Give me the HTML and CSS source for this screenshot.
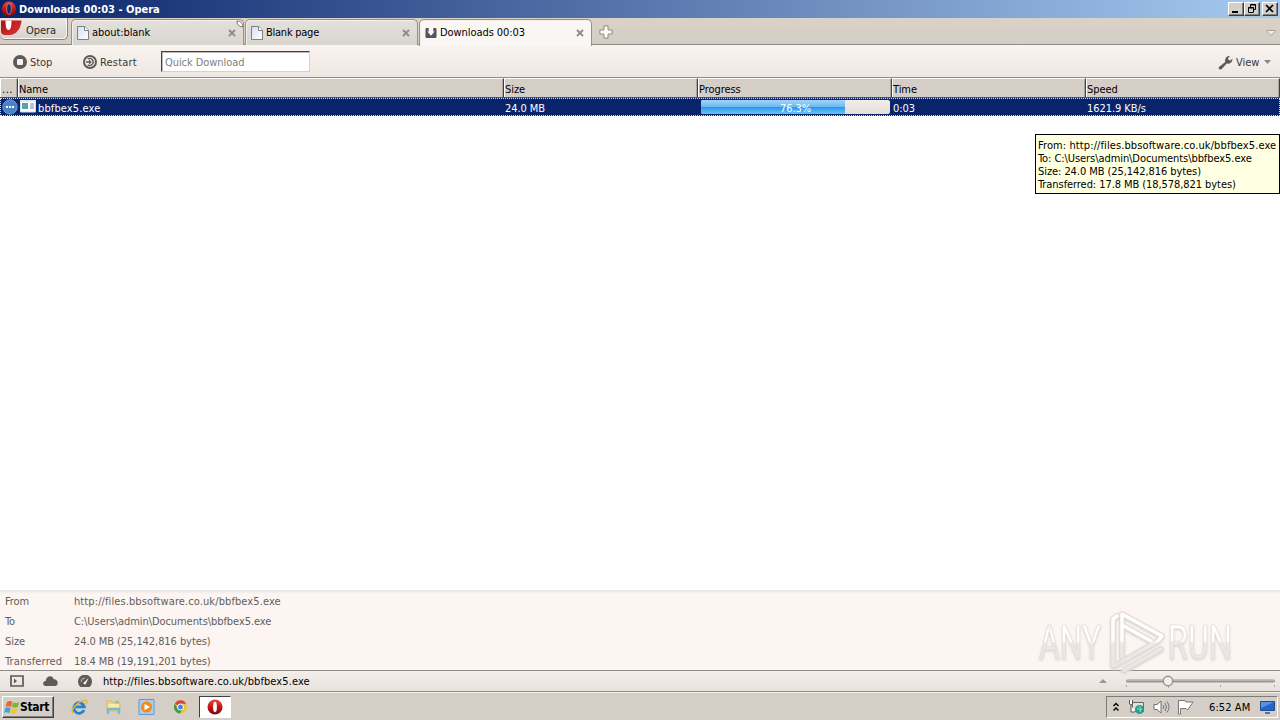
FILE: index.html
```html
<!DOCTYPE html>
<html lang="en">
<head>
<meta charset="utf-8">
<title>Downloads 00:03 - Opera</title>
<link rel="stylesheet" href="styles.css">
</head>
<body>
<svg class="defs" width="0" height="0">
  <defs>
    <linearGradient id="red" x1="0" y1="0" x2="0" y2="1"><stop offset="0" stop-color="#ed4a40"/><stop offset=".5" stop-color="#c51414"/><stop offset="1" stop-color="#7e0508"/></linearGradient>
    <linearGradient id="menured" x1="0" y1="0" x2="1" y2="1"><stop offset="0" stop-color="#b00d12"/><stop offset="1" stop-color="#e03a36"/></linearGradient>
    <linearGradient id="doc" x1="0" y1="0" x2="1" y2="1"><stop offset="0" stop-color="#d5dff0"/><stop offset="1" stop-color="#fff"/></linearGradient>
    <linearGradient id="mark" x1="0" y1="0" x2="0" y2="1"><stop offset="0" stop-color="#fff"/><stop offset=".48" stop-color="#fff"/><stop offset=".52" stop-color="#eee8e6"/><stop offset="1" stop-color="#e9e4e2"/></linearGradient>
    <symbol id="page" viewBox="0 0 12 14"><path d="M.5.5h7.300l3.700 3.700v9.300H.5z" fill="url(#doc)" stroke="#7b7f8c"/><path d="M7.500.5v4h4" fill="#fff" stroke="#7b7f8c"/></symbol>
    <symbol id="close" viewBox="0 0 8 8"><path d="M1 1l6 6M7 1L1 7" stroke="#918c87" stroke-width="1.900"/></symbol>
  </defs>
</svg>
<div class="screen">
  <header class="titlebar">
    <svg class="title-logo" width="16" height="16" viewBox="0 0 16 16"><ellipse cx="8" cy="8" rx="7" ry="7.500" fill="url(#red)"/><ellipse cx="8" cy="8" rx="2.300" ry="5.300" fill="#0d2a6c" stroke="#f0a8a4" stroke-width=".6"/></svg>
    <span class="title">Downloads 00:03 - Opera</span>
    <div class="winbtns">
      <span class="wb"><svg width="14" height="12"><path d="M3 9h6" stroke="#000" stroke-width="2"/></svg></span>
      <span class="wb"><svg width="14" height="12" fill="none" stroke="#000"><path d="M5.500 4V1.500h5v5H9M5 2h6"/><path d="M3.500 4.500h5v5h-5zM3 5h6"/></svg></span>
      <span class="wb last"><svg width="14" height="12"><path d="M3 2l7 7M10 2L3 9" stroke="#000" stroke-width="1.700"/></svg></span>
    </div>
  </header>

  <nav class="tabbar">
    <div class="menu">
      <svg width="22" height="18" viewBox="0 0 22 18"><path d="M1 2.500h20.500C21 10 17 17 9 17H5C2.500 17 1 15.500 1 13z" fill="url(#menured)"/><path d="M5.500 2.500h6c0 5-.6 9.500-3 9.500s-3-4.500-3-9.500z" fill="#fff"/></svg>
      <span>Opera</span>
    </div>
    <div class="tab"><svg class="doc" width="12" height="14"><use href="#page"/></svg><span class="tl">about:blank</span><svg class="x" width="8" height="8"><use href="#close"/></svg>
      <svg class="curl" width="8" height="8" viewBox="0 0 8 8"><path d="M1 1c0 3 1 5 5.500 6C7 3 4 1 1 1z" fill="#fff" stroke="#77736e"/></svg></div>
    <div class="tab"><svg class="doc" width="12" height="14"><use href="#page"/></svg><span class="tl t-blank">Blank page</span><svg class="x" width="8" height="8"><use href="#close"/></svg></div>
    <div class="tab active"><svg class="dl" width="12" height="12" viewBox="0 0 13 12"><path d="M2 .5h2v4H2.500L6.500 9l4-4.500H9v-4h2q1.500 0 1.500 1.500v8q0 1.500-1.500 1.500H2Q.5 11.500.5 10V2Q.5.5 2 .5z" fill="#55525d"/></svg><span class="tl t-down">Downloads 00:03</span><svg class="x" width="8" height="8"><use href="#close"/></svg></div>
    <svg class="plus" width="14" height="14" viewBox="0 0 14 14"><path d="M5 .9h4V5h4.100v4H9v4.100H5V9H.9V5H5z" fill="#fff" stroke="#8e8984"/></svg>
    <svg class="trash" width="10" height="8" viewBox="0 0 10 8"><path d="M1 1.500h8v1L5 6.500 1 2.500z" fill="#ece8e2" stroke="#a7a39d"/></svg>
  </nav>

  <div class="toolbar">
    <svg width="14" height="14" viewBox="0 0 14 14"><circle cx="7" cy="7" r="7" fill="#5e5a58"/><rect x="4" y="4" width="6" height="6" rx="1" fill="#f6f1ed"/></svg>
    <span class="t-stop">Stop</span>
    <svg width="14" height="14" viewBox="0 0 14 14"><circle cx="7" cy="7" r="6" fill="none" stroke="#5e5a58" stroke-width="2"/><path d="M4.700 4.300A3.400 3.400 0 1 1 4.700 9.700" fill="none" stroke="#5e5a58" stroke-width="1.300"/><path d="M3 6.300h3V4.500L8.800 7 6 9.500V7.700H3z" fill="#5e5a58"/></svg>
    <span class="t-restart">Restart</span>
    <div class="quick">Quick Download</div>
    <div class="view">
      <svg width="15" height="15" viewBox="0 0 15 15"><path d="M1 12L7.200 7C6.500 3.500 8.500.8 12 1L10 3.300l.6 1.700 1.900.4L14.300 3.500C15 7 12 9.300 8.800 8.600L3.500 14.300C1.500 15-.2 13.500 1 12z" fill="#5e5a58"/></svg>
      <span>View</span>
      <svg width="7" height="4"><path d="M0 0h7L3.500 4z" fill="#8b8681"/></svg>
    </div>
  </div>

  <div class="grid head"><div class="dots">...</div><div>Name</div><div>Size</div><div>Progress</div><div>Time</div><div>Speed</div></div>
  <div class="grid row">
    <div class="state"><svg width="16" height="16" viewBox="0 0 16 16"><circle cx="8" cy="8" r="7.200" fill="#4a83c8" stroke="#6b9bd6"/><path d="M4 7h2v2H4zM7 7h2v2H7zM10 7h2v2h-2z" fill="#fff"/></svg></div>
    <div class="file"><svg width="16" height="13" viewBox="0 0 16 13"><path d="M.5.5h15v11.500H.5z" fill="#fff" stroke="#d4dce6"/><path d="M0 0h16v2H0z" fill="#dfe9f5"/><path d="M2 3h6v6H2z" fill="#55a3a4"/><path d="M10 4h4M10 6h4M10 8h4" stroke="#7785a0"/></svg><span>bbfbex5.exe</span></div>
    <div>24.0 MB</div>
    <div class="cell-bar"><div class="bar"><div class="fill" style="width:76.3%"></div><span>76.3%</span></div></div>
    <div>0:03</div><div>1621.9 KB/s</div>
  </div>

  <main class="empty">
    <div class="tip"><div class="url">From: http://files.bbsoftware.co.uk/bbfbex5.exe</div><div>To: C:\Users\admin\Documents\bbfbex5.exe</div><div>Size: 24.0 MB (25,142,816 bytes)</div><div>Transferred: 17.8 MB (18,578,821 bytes)</div></div>
  </main>

  <section class="details">
    <span>From</span><span class="url">http://files.bbsoftware.co.uk/bbfbex5.exe</span>
    <span>To</span><span>C:\Users\admin\Documents\bbfbex5.exe</span>
    <span>Size</span><span>24.0 MB (25,142,816 bytes)</span>
    <span class="wide">Transferred</span><span>18.4 MB (19,191,201 bytes)</span>
    <div class="watermark">
      <svg width="220" height="72" viewBox="0 0 220 72">
        <g class="marktext"><text transform="translate(5 54) scale(.65 1)">ANY</text><text transform="translate(134 54) scale(.66 1)">RUN</text></g>
        <g fill="none" stroke-linejoin="round" stroke-linecap="round">
          <path d="M79 60V14l4-3M88 52V9L128 31l-4 5M88 20l29 16M80 61l44-25M90 65l37-21" stroke="#e0dad8" stroke-width="5.500"/>
          <path d="M79 60V14l4-3M88 52V9L128 31l-4 5M88 20l29 16M80 61l44-25M90 65l37-21" stroke="url(#mark)" stroke-width="3.500"/>
        </g>
      </svg>
    </div>
  </section>

  <div class="status">
    <svg class="panel" width="14" height="12" viewBox="0 0 14 12"><path d="M1 1h12v10H1z" fill="none" stroke="#5e5a58" stroke-width="1.700"/><path d="M4 3.500L7 6 4 8.500z" fill="#5e5a58"/></svg>
    <svg class="cloud" width="15" height="10" viewBox="0 0 15 10"><path d="M3 10C-.8 10-.7 5 2.800 5 3-.7 10-1.200 10.700 3.300 15.500 2.800 16 10 12 10z" fill="#5e5a58"/></svg>
    <svg class="turbo" width="14" height="12" viewBox="0 0 14 12"><path d="M2.500 12A7 7 0 1 1 11.500 12z" fill="#5e5a58"/><path d="M5 8.500l5.500-5.500-3 6.500z" fill="#fff"/><path d="M3 7a4 4 0 0 1 4-4" stroke="#bbb" fill="none"/></svg>
    <span class="url">http://files.bbsoftware.co.uk/bbfbex5.exe</span>
    <svg class="zoom" width="178" height="20" viewBox="0 0 178 20"><path d="M0 12l4-4 4 4z" fill="#9b9691"/><path d="M28.500 10h146" stroke="#9c9692" stroke-width="3" stroke-linecap="round"/><path d="M28.500 9.500h146" stroke="#bbb5b0" stroke-linecap="round"/><path d="M27.500 14v2M69.500 14v3M121.500 14v2M175.500 14v2" stroke="#aaa5a0"/><circle cx="69" cy="10" r="4.700" fill="#f4efeb" stroke="#99938f" stroke-width="1.500"/></svg>
  </div>

  <footer class="taskbar">
    <div class="start"><svg width="16" height="15" viewBox="0 0 16 15"><path d="M3 2q3-2 5.500 0L7 7Q4.500 5.500 1.500 6.700z" fill="#e9672b"/><path d="M9.300 2.200q3 1.500 6 0L13.800 7q-3 1.500-6 0z" fill="#80b72e"/><path d="M1.200 8Q4 6.500 6.700 8.200l-1.500 5Q2.500 11.500 0 13z" fill="#479edb"/><path d="M7.600 8.300q3 1.500 6 .2l-1.500 4.700q-3 1.500-6 0z" fill="#f6c42d"/></svg><b>Start</b></div>
    <svg class="app" width="17" height="16" viewBox="0 0 17 16"><path d="M13 11A5.300 5.300 0 1 1 13.300 7.900H4.500" fill="none" stroke="#2684cf" stroke-width="2.800"/><path d="M2 14C-2 12 8 1 14.500 1.500 17 2 15.500 4 14.700 5" fill="none" stroke="#e4b82f" stroke-width="1.400"/></svg>
    <svg class="app" width="17" height="16" viewBox="0 0 17 16"><path d="M2 2h5l1 2h7v8H2z" fill="#f1d476" stroke="#d9b659" stroke-width=".8"/><path d="M3 5h11v5H3z" fill="#fae9a5"/><path d="M3 15V10h11v5" fill="none" stroke="#78b7dc" stroke-width="2.400"/><path d="M10 3h4" stroke="#7dab5d"/></svg>
    <svg class="app" width="17" height="16" viewBox="0 0 17 16"><path d="M1 .5h15v15H1z" fill="#a9cdea" stroke="#5f9bcf"/><circle cx="8.500" cy="8" r="5.500" fill="#f08a1c"/><path d="M6.500 4.700L12 8l-5.500 3.300z" fill="#fff"/></svg>
    <svg class="app" width="17" height="16" viewBox="0 0 17 16"><circle cx="8.500" cy="8" r="6.500" fill="#f2c630"/><path d="M8.500 8L2.800 4.700A6.500 6.500 0 0 1 14.200 4.700H8.500z" fill="#dc4437"/><path d="M2.800 4.700A6.500 6.500 0 0 0 8 14.500L11 9.500 5.700 9.500z" fill="#3b9b56"/><circle cx="8.500" cy="8" r="3" fill="#4484df" stroke="#fff"/></svg>
    <div class="running"><svg width="16" height="16" viewBox="0 0 16 16"><circle cx="8" cy="8" r="7.500" fill="url(#red)"/><ellipse cx="8" cy="8" rx="1.900" ry="5.200" fill="#fff"/></svg></div>
    <div class="tray">
      <svg class="chev" width="6" height="10" viewBox="0 0 6 10"><path d="M.5 4L3 1.500 5.500 4M.5 8.500L3 6l2.500 2.500" fill="none" stroke="#000" stroke-width="1.400"/></svg>
      <svg class="net" width="17" height="16" viewBox="0 0 17 16"><path d="M4.500 3.500h11v9h-11z" fill="#dfe4e2" stroke="#666"/><path d="M1.500 1v4q1.500 2 3 0V1M3 6v7h4" stroke="#555" fill="#fff"/><circle cx="11.500" cy="10.500" r="4.500" fill="#27a18e"/><path d="M9 9q3 3 5 1M11 7q3 2 1 6" stroke="#a2ddd0" fill="none"/></svg>
      <svg class="vol" width="17" height="14" viewBox="0 0 17 14"><path d="M1 4.500h3L8 1v12L4 9.500H1z" fill="#fff" stroke="#707070"/><path d="M10 5q1.500 2 0 4M12 3q3 4 0 8M14 1.500q4 5.500 0 11" fill="none" stroke="#777"/></svg>
      <svg class="flag" width="17" height="16" viewBox="0 0 17 16"><path d="M1.500 1v14h2V9.500H9l1.500 1.500 1.500-2 4-6H9l-1-1.500H1.500z" fill="#fff" stroke="#777"/></svg>
      <span>6:52 AM</span>
      <svg class="desk" width="15" height="13" viewBox="0 0 15 13"><path d="M.5.5h14v9H.5z" fill="#2864c8" stroke="#234b91"/><path d="M1 1h13L1 7z" fill="#5394e5"/><path d="M5 12h5" stroke="#5c7397" stroke-width="2"/></svg>
    </div>
  </footer>
</div>
</body>
</html>
```
FILE: styles.css
```css
* { box-sizing: border-box; }
body { margin: 0; }
svg { display: block; flex: none; }
.defs { position: absolute; }
.screen { width: 1280px; height: 720px; overflow: hidden; display: flex; flex-direction: column; background: #fff; color: #000; font: 11px/13px "DejaVu Sans Condensed", "DejaVu Sans", sans-serif; font-stretch: condensed; letter-spacing: -.07px; white-space: nowrap; }
.url { letter-spacing: .1px; }
.wide { letter-spacing: .15px; }
.titlebar { height: 18px; flex: none; display: flex; align-items: center; padding: 0 2px 0 1px; background: linear-gradient(90deg, #0a246a, #a6caf0); color: #fff; }
.title { font-weight: bold; letter-spacing: 0; margin-left: 2px; }
.winbtns { margin-left: auto; display: flex; }
.wb { width: 16px; height: 14px; background: #d4d0c8; border: 1px solid; border-color: #fff #404040 #404040 #fff; box-shadow: inset -1px -1px #808080; }
.wb.last { margin-left: 2px; }

.tabbar { height: 27px; flex: none; display: flex; align-items: flex-start; background: linear-gradient(#dbd1c6, #d4cec7); border-bottom: 1px solid #8f8b86; }
.menu { width: 68px; height: 22px; display: flex; border: 1px solid #87837e; border-left: 0; border-top: 0; border-radius: 0 0 5px 5px; background: linear-gradient(#ebe8e4, #d6d2cd); box-shadow: inset -1px -1px #f6f4f1; margin-right: 3px; }
.menu span { margin: 6px 0 0 4px; color: #2c2927; }
.tab { position: relative; width: 173px; height: 26px; margin: 1px 1px 0 0; border: 1px solid #96918c; border-bottom: 0; border-radius: 5px 5px 0 0; background: linear-gradient(#e4e1dc, #d8d4ce); box-shadow: inset 1px 1px #f3f0ec; display: flex; align-items: center; padding: 1px 7px 1px 5px; }
.tab.active { background: #faf6f3; height: 27px; padding-bottom: 2px; }
.tl { margin-left: 3px; }
.t-blank { letter-spacing: -.25px; }
.x { margin-left: auto; }
.curl { position: absolute; right: -1px; top: 0; }
.plus { margin: 7px 0 0 6px; }
.trash { margin: 11px 4px 0 auto; }

.toolbar { height: 32px; flex: none; display: flex; align-items: center; padding: 2px 9px 0 13px; background: linear-gradient(#faf4f0, #eee7e2); color: #3c3835; }
.t-stop { margin: 1px 0 0 3px; width: 53px; }
.t-restart { margin: 1px 0 0 3px; width: 61px; letter-spacing: .2px; }
.quick { width: 149px; height: 21px; padding: 4px 3px; background: #fff; color: #7f7f7f; border: 1px solid; border-color: #45413f #d6d1cc #d6d1cc #45413f; box-shadow: inset 1px 1px #bbb; margin-top: -2px; }
.view { margin-left: auto; display: flex; align-items: center; gap: 3px; }
.view span { width: 25px; margin-top: 1px; }

.grid { flex: none; display: grid; grid-template-columns: 18px 486px 194px 194px 194px 194px; }
.head { height: 21px; background: #d4cec7; border-top: 1px solid #8f8b86; border-bottom: 1px solid #55504c; }
.head div { padding: 4px 0 0; border-right: 1px solid #45413f; border-left: 1px solid #fff; border-top: 1px solid #fff; box-shadow: inset -1px 0 #aaa49e; }
.head .dots { letter-spacing: .5px; padding-left: 1px; }
.row { height: 18px; background: #0a246a; color: #fff; outline: 1px dotted #f5db95; outline-offset: -1px; }
.row > div { padding: 4px 0 0 1px; }
.row .state { padding: 1px 0 0 2px; }
.row .file { display: flex; padding: 2px 0 0 2px; }
.file span { margin: 2px 0 0 2px; letter-spacing: .12px; }
.row .cell-bar { padding: 2px 2px 0 3px; }
.bar { position: relative; height: 14px; border-radius: 2px; overflow: hidden; background: linear-gradient(#f4eee7, #e5dfda); }
.fill { height: 14px; background: linear-gradient(#a6d4f8 0, #6bb8f2 48%, #2896e8 50%, #68c5fa 100%); }
.bar span { position: absolute; inset: 2px 0 0; text-align: center; }

.empty { flex: none; height: 474px; display: flex; justify-content: flex-end; align-items: flex-start; padding-top: 18px; }
.tip { width: 245px; height: 60px; padding: 4px 0 0 2px; background: #ffffe1; border: 1px solid #000; }

.details { position: relative; flex: none; height: 80px; display: grid; grid-template-columns: 69px auto; grid-auto-rows: 20px; justify-content: start; padding: 5px 0 0 5px; color: #625d5a; background: linear-gradient(#e9e5e3, #fcf5f2 4px); }
.watermark { position: absolute; left: 1034px; top: 15px; filter: drop-shadow(0 1px 1px #d8d0cd); }
.marktext { font: 49px Roboto, sans-serif; letter-spacing: 0; fill: url(#mark); stroke: #e3dcda; stroke-width: .7px; }

.status { flex: none; height: 22px; display: flex; align-items: center; padding: 0 3px 0 10px; border-top: 1px solid #8f8b86; border-bottom: 1px solid #8f8b86; background: linear-gradient(#f4eeea, #e8e1dc); }
.cloud { margin-left: 19px; }
.turbo { margin: 0 11px 0 20px; }
.zoom { margin-left: auto; }

.taskbar { flex: none; height: 28px; display: flex; align-items: center; padding: 1px 2px 0 2px; background: #d4cec6; border-top: 1px solid #f7f4ef; }
.start { width: 52px; height: 22px; margin-right: 17px; display: flex; align-items: center; padding-left: 1px; border: 1px solid; border-color: #fff #404040 #404040 #fff; box-shadow: inset -1px -1px #808080; }
.start b { letter-spacing: -.3px; font-size: 12px; }
.app { margin-right: 16.500px; }
.running { width: 32px; height: 22px; margin-left: -6px; display: grid; place-items: center; background: #fff; border: 1px solid; border-color: #404040 #fff #fff #404040; }
.tray { margin-left: auto; width: 172px; height: 22px; display: flex; align-items: center; padding-left: 6px; border: 1px solid; border-color: #7f7b76 #fff #fff #7f7b76; }
.net { margin-left: 9px; }
.vol { margin-left: 8px; }
.flag { margin-left: 7px; }
.tray span { margin-left: 15px; width: 51px; letter-spacing: .1px; }
```
